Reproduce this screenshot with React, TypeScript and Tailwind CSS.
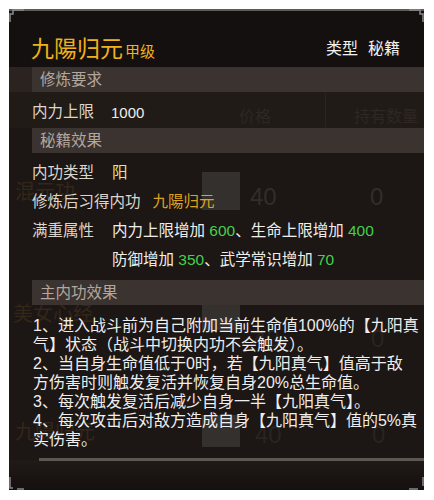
const FONT = "font-['Liberation_Sans','Noto_Sans_CJK_SC',sans-serif]";

function Bar({ title }: { title: string }) {
  return (
    <div className="ml-[23px] h-[25px] bg-[#3b332f] pl-[8px] flex items-center text-[15.5px] text-[#b3a79d] leading-none">
      {title}
    </div>
  );
}

function Row({ label, children }: { label: string; children: React.ReactNode }) {
  return (
    <div className="h-[29px] pl-[23px] flex items-center gap-[16px] text-[15.5px] leading-none">
      <span className="min-w-[64px] text-[#dcd6cc]">{label}</span>
      <span className="text-[#f0eeea]">{children}</span>
    </div>
  );
}

const G = ({ children }: { children: React.ReactNode }) => (
  <span className="text-[#44d04c]">{children}</span>
);

const DESC = [
  "1、进入战斗前为自己附加当前生命值100%的【九阳真",
  "气】状态（战斗中切换内功不会触发）。",
  "2、当自身生命值低于0时，若【九阳真气】值高于敌",
  "方伤害时则触发复活并恢复自身20%总生命值。",
  "3、每次触发复活后减少自身一半【九阳真气】。",
  "4、每次攻击后对敌方造成自身【九阳真气】值的5%真",
  "实伤害。",
];

function Corners() {
  return (
    <>
      <svg className="absolute left-0 top-0" width="16" height="14" viewBox="0 0 16 14">
        <path d="M1 13 V5 H4 V1 H15" fill="none" stroke="#8c8886" strokeWidth="1.5" />
      </svg>
      <svg className="absolute right-0 top-0" width="16" height="14" viewBox="0 0 16 14">
        <path d="M1 1 H12 V5 H15 V13" fill="none" stroke="#8c8886" strokeWidth="1.5" />
      </svg>
      <svg className="absolute left-0 bottom-0" width="16" height="14" viewBox="0 0 16 14">
        <path d="M1 1 V12 H4 M8 13 H15" fill="none" stroke="#8c8886" strokeWidth="1.5" />
      </svg>
      <svg className="absolute right-0 bottom-0" width="16" height="14" viewBox="0 0 16 14">
        <path d="M1 13 H10 M15 1 V10" fill="none" stroke="#8c8886" strokeWidth="1.5" />
      </svg>
    </>
  );
}

function Ghost() {
  // the shop list that shows through the translucent tooltip
  return (
    <div className="absolute inset-0 pointer-events-none">
      <div className="absolute left-0 right-0 top-[58px] h-[25px] bg-[#2a2320]" />
      <div className="absolute left-0 right-0 top-[83px] h-[36px] bg-[#211b18]" />
      <span className="absolute left-[230px] top-[96px] text-[16px] text-[#2f2723]">价格</span>
      <div className="absolute left-[316px] top-[84px] h-[34px] w-px bg-[#2b2420]" />
      <span className="absolute left-[345px] top-[96px] text-[16px] text-[#2f2723]">持有数量</span>

      <div className="absolute left-[193px] top-[163px] w-[38px] h-[38px] bg-[#34302e]" />
      <span className="absolute left-[6px] top-[168px] text-[20px] text-[#33271a]">混元功</span>
      <span className="absolute left-[241px] top-[170px] text-[24px] text-[#332d2a]">40</span>
      <span className="absolute left-[361px] top-[170px] text-[24px] text-[#332d2a]">0</span>

      <div className="absolute left-[193px] top-[281px] w-[38px] h-[40px] bg-[#34302e]" />
      <span className="absolute left-[4px] top-[290px] text-[20px] text-[#33271a]">美女心经</span>
      <span className="absolute left-[244px] top-[312px] text-[24px] text-[#292421]">40</span>
      <span className="absolute left-[362px] top-[312px] text-[24px] text-[#292421]">0</span>

      <div className="absolute left-[193px] top-[406px] w-[38px] h-[32px] bg-[#34302e]" />
      <span className="absolute left-[6px] top-[408px] text-[20px] text-[#33271a]">九陽归元</span>
      <span className="absolute left-[246px] top-[408px] text-[24px] text-[#292421]">40</span>
      <span className="absolute left-[363px] top-[408px] text-[24px] text-[#292421]">0</span>
    </div>
  );
}

export default function App() {
  return (
    <div className={`w-[434px] h-[500px] bg-white pt-[9px] pl-[9px] ${FONT}`}>
      <div className="relative w-[415px] h-[481px] overflow-hidden bg-[#1c1614]">
        <div className="absolute left-0 right-0 top-0 h-[58px] bg-[#141010]" />
        <div className="absolute left-0 right-0 bottom-0 h-[30px] bg-gradient-to-b from-[#211a17] to-[#141010]" />
        <Ghost />
        <div className="absolute left-0 right-0 top-0 h-[2px] bg-[#5e5a58]" />
        <Corners />

        <div className="relative flex flex-col">
          <div className="h-[58px] pt-[26px] pl-[22px] pr-[24px] flex justify-between">
            <div className="flex items-end h-[28px] gap-[2px]">
              <span className="text-[23px] leading-[28px] text-[#f0b21a]">九陽归元</span>
              <span className="text-[15px] leading-[22px] text-[#f0b21a]">甲级</span>
            </div>
            <div className="flex items-center h-[28px] gap-[10px] text-[16px] text-[#f2f2f2]">
              <span>类型</span>
              <span>秘籍</span>
            </div>
          </div>

          <Bar title="修炼要求" />
          <div className="h-[36px] pt-[4px] pl-[23px] flex items-center gap-[17px] text-[15.5px] leading-none">
            <span className="text-[#dcd6cc]">内力上限</span>
            <span className="text-[#f0eeea] text-[15px]">1000</span>
          </div>

          <Bar title="秘籍效果" />
          <div className="pt-[5px] mb-[6px]">
            <Row label="内功类型">
              <span className="text-[#ebe57a]">阳</span>
            </Row>
            <div className="h-[29px] pl-[23px] flex items-center gap-[12px] text-[15.5px] leading-none">
              <span className="text-[#dcd6cc]">修炼后习得内功</span>
              <span className="text-[#dca41e]">九陽归元</span>
            </div>
            <Row label="满重属性">
              内力上限增加 <G>600</G>、生命上限增加 <G>400</G>
            </Row>
            <Row label="">
              防御增加 <G>350</G>、武学常识增加 <G>70</G>
            </Row>
          </div>

          <Bar title="主内功效果" />
          <div className="pt-[11px] pl-[24px] text-[16px] leading-[19px] text-[#eeeeee]">
            {DESC.map((line) => (
              <div key={line} className="whitespace-nowrap">
                {line}
              </div>
            ))}
          </div>

          <div className="mt-[9px] ml-[30px] h-[3px] bg-[#5d5753]" />
        </div>
      </div>
    </div>
  );
}
